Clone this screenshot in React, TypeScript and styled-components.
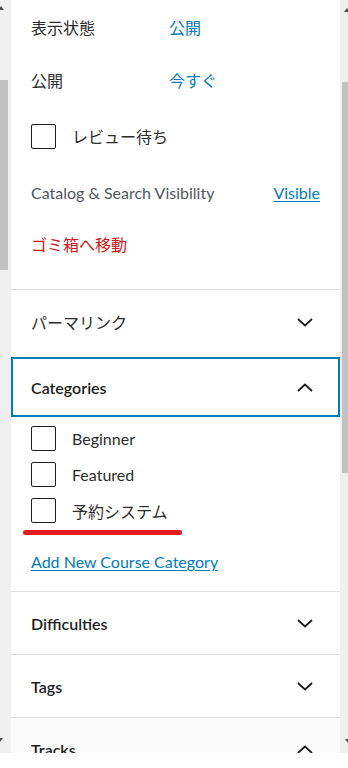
import React from "react";
import styled, { createGlobalStyle } from "styled-components";

const GlobalStyle = createGlobalStyle`
  html, body {
    margin: 0;
    padding: 0;
    background: #ffffff;
  }
  body {
    font-family: "Lato", "Noto Sans CJK JP", sans-serif;
    font-size: 16px;
    color: #1e1e1e;
  }
`;

const Screen = styled.div`
  width: 348px;
  height: 768px;
  display: flex;
  flex-direction: column;
  overflow: hidden;
`;

const Viewport = styled.div`
  height: 753px;
  flex: none;
  display: flex;
  background: #f0f0f0;
`;

const Gutter = styled.div<{ $w: number; $align: "start" | "end" }>`
  width: ${(p) => p.$w}px;
  flex: none;
  display: flex;
  flex-direction: column;
  align-items: ${(p) => (p.$align === "start" ? "flex-start" : "flex-end")};
`;

const Arrow = styled.div<{ $dir: "up" | "down"; $top: number }>`
  margin-top: ${(p) => p.$top}px;
  width: 0;
  height: 0;
  border-left: 3px solid transparent;
  border-right: 3px solid transparent;
  ${(p) =>
    p.$dir === "up"
      ? "border-bottom: 4px solid #505050;"
      : "border-top: 4px solid #505050;"}
`;

const Thumb = styled.div<{ $w: number; $top: number; $h: number }>`
  width: ${(p) => p.$w}px;
  height: ${(p) => p.$h}px;
  margin-top: ${(p) => p.$top}px;
  background: #c1c1c1;
`;

const Spacer = styled.div`
  flex: 1;
`;

const Panel = styled.div`
  width: 329px;
  flex: none;
  background: #fff;
  display: flex;
  flex-direction: column;
  overflow: hidden;
  & > * {
    flex-shrink: 0;
  }
`;

const StatusSection = styled.div`
  padding: 0 20px 19px;
  display: flex;
  flex-direction: column;
`;

const StatusRow = styled.div<{ $h: number }>`
  height: ${(p) => p.$h}px;
  display: flex;
  align-items: center;
`;

const Label = styled.span<{ $muted?: boolean }>`
  width: 138px;
  flex: none;
  color: ${(p) => (p.$muted ? "#50575e" : "#2c2c2c")};
  white-space: nowrap;
`;

const Value = styled.a<{ $underline?: boolean }>`
  color: #007cba;
  text-decoration: ${(p) => (p.$underline ? "underline" : "none")};
  text-underline-offset: 2px;
  margin-left: ${(p) => (p.$underline ? "auto" : "0")};
`;

const Trash = styled.a`
  color: #cc1818;
`;

const Box = styled.span`
  width: 23px;
  height: 23px;
  flex: none;
  border: 1px solid #1e1e1e;
  border-radius: 2px;
  background: #fff;
`;

const CheckLabel = styled.span`
  margin-left: 16px;
  color: #2c2c2c;
`;

const Section = styled.div<{ $hover?: boolean }>`
  border-top: 1px solid #e0e0e0;
  background: ${(p) => (p.$hover ? "#fafafa" : "#fff")};
`;

const Toggle = styled.div<{ $h: number; $focus?: boolean; $lift?: number }>`
  height: ${(p) => p.$h}px;
  box-sizing: border-box;
  padding: 0 27px ${(p) => p.$lift ?? 0}px 20px;
  display: flex;
  align-items: center;
  justify-content: space-between;
  color: #1e1e1e;
  ${(p) =>
    p.$focus
      ? "border: 2px solid #007cba; padding-left: 18px; padding-right: 25px;"
      : ""}
`;

const ToggleTitle = styled.span<{ $plain?: boolean }>`
  font-weight: ${(p) => (p.$plain ? 400 : 600)};
  color: ${(p) => (p.$plain ? "#2c2c2c" : "#1e1e1e")};
`;

const CategoryBody = styled.div`
  padding: 9px 20px 15px;
  display: flex;
  flex-direction: column;
`;

const CheckRow = styled.label`
  height: 25px;
  margin-bottom: 11px;
  display: flex;
  align-items: center;
  &:last-of-type {
    margin-bottom: 0;
  }
`;

const Marker = styled.div`
  width: 159px;
  height: 5px;
  margin: 7px 0 0 -8px;
  border-radius: 3px;
  background: #e41b1f;
`;

const AddLink = styled.a`
  margin-top: 12px;
  line-height: 29px;
  color: #007cba;
  text-decoration: underline;
  text-underline-offset: 2px;
`;

const Bottom = styled.div`
  height: 15px;
  flex: none;
  background: #fff;
`;

const Chevron = ({ up }: { up?: boolean }) => (
  <svg width="16" height="9" viewBox="0 0 16 9" fill="none">
    <polyline
      points={up ? "1,8 8,1.5 15,8" : "1,1 8,7.5 15,1"}
      stroke="#1e1e1e"
      strokeWidth="1.8"
    />
  </svg>
);

const categories = ["Beginner", "Featured", "予約システム"];

const App = () => {
  return (
    <Screen>
      <GlobalStyle />
      <Viewport>
        <Gutter $w={11} $align="start">
          <Arrow $dir="up" $top={6} style={{ marginLeft: -2 }} />
          <Thumb $w={8} $top={70} $h={190} />
          <Spacer />
          <Arrow $dir="down" $top={0} style={{ marginLeft: -3, marginBottom: 11 }} />
        </Gutter>

        <Panel>
          <StatusSection>
            <StatusRow $h={54}>
              <Label>表示状態</Label>
              <Value>公開</Value>
            </StatusRow>
            <StatusRow $h={52}>
              <Label>公開</Label>
              <Value>今すぐ</Value>
            </StatusRow>
            <StatusRow $h={60}>
              <Box />
              <CheckLabel>レビュー待ち</CheckLabel>
            </StatusRow>
            <StatusRow $h={52}>
              <Label $muted>Catalog &amp; Search Visibility</Label>
              <Value $underline>Visible</Value>
            </StatusRow>
            <StatusRow $h={52}>
              <Trash>ゴミ箱へ移動</Trash>
            </StatusRow>
          </StatusSection>

          <Section>
            <Toggle $h={67} $lift={3}>
              <ToggleTitle $plain>パーマリンク</ToggleTitle>
              <Chevron />
            </Toggle>
          </Section>

          <Toggle $h={60} $focus>
            <ToggleTitle>Categories</ToggleTitle>
            <Chevron up />
          </Toggle>
          <CategoryBody>
            {categories.map((c) => (
              <CheckRow key={c}>
                <Box />
                <CheckLabel>{c}</CheckLabel>
              </CheckRow>
            ))}
            <Marker />
            <AddLink>Add New Course Category</AddLink>
          </CategoryBody>

          <Section>
            <Toggle $h={62}>
              <ToggleTitle>Difficulties</ToggleTitle>
              <Chevron />
            </Toggle>
          </Section>
          <Section>
            <Toggle $h={62}>
              <ToggleTitle>Tags</ToggleTitle>
              <Chevron />
            </Toggle>
          </Section>
          <Section $hover>
            <Toggle $h={62}>
              <ToggleTitle>Tracks</ToggleTitle>
              <Chevron up />
            </Toggle>
          </Section>
        </Panel>

        <Gutter $w={8} $align="end">
          <Arrow $dir="up" $top={8} style={{ marginRight: -2 }} />
          <Thumb $w={6} $top={70} $h={391} />
          <Spacer />
          <Arrow $dir="down" $top={0} style={{ marginRight: -3, marginBottom: 10 }} />
        </Gutter>
      </Viewport>
      <Bottom />
    </Screen>
  );
};

export default App;
